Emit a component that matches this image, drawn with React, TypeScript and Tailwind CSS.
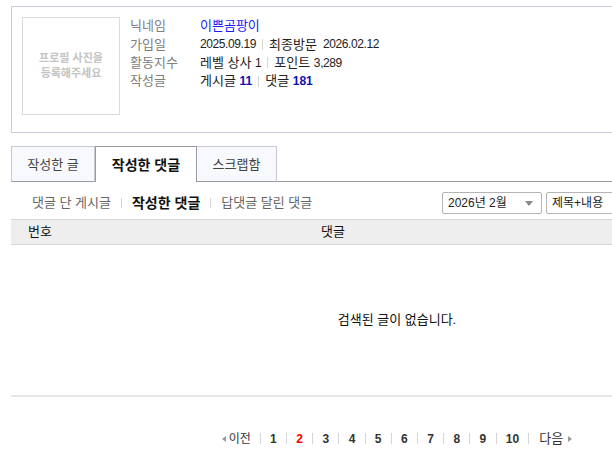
import React from 'react';

const FONT = { fontFamily: '"Liberation Sans", "Noto Sans CJK KR", sans-serif' };

function Sep({ h = 'h-[11px]' }: { h?: string }) {
  return <span className={`inline-block w-px ${h} bg-[#d5d5d5]`} />;
}

function ProfileRow({ label, children }: { label: string; children: React.ReactNode }) {
  return (
    <div className="flex h-[18.3px] items-center">
      <span className="w-[70px] text-[13px] text-[#808080]">{label}</span>
      <div className="flex items-center gap-[6px] text-[13px] text-[#222]">{children}</div>
    </div>
  );
}

function Num({ children }: { children: React.ReactNode }) {
  return <span className="text-[12px] tracking-[-0.4px]">{children}</span>;
}

function Select({ label, width, arrow }: { label: string; width: string; arrow?: boolean }) {
  return (
    <div className={`flex h-[22px] ${width} items-center justify-between rounded-[2px] border border-[#b5b5b5] bg-white pl-[5px] pr-[8px] text-[12px] text-[#222]`}>
      <span>{label}</span>
      {arrow && (
        <svg width="8" height="5" viewBox="0 0 8 5">
          <path d="M0 0h8L4 5z" fill="#888" />
        </svg>
      )}
    </div>
  );
}

export default function App() {
  const pages = [1, 2, 3, 4, 5, 6, 7, 8, 9, 10];
  return (
    <div className="h-[453px] w-[612px] overflow-hidden bg-white text-[12px]" style={FONT}>
      <div className="w-[783px] pl-[11px] pt-[6px]">
        {/* profile */}
        <div className="flex h-[127px] border border-[#cdcdda] p-[10px]">
          <div className="flex h-[98px] w-[98px] flex-col items-center justify-center border border-[#dcdcdc] text-[11px] font-bold leading-[15px] text-[#c4c4c4]">
            <span>프로필 사진을</span>
            <span>등록해주세요</span>
          </div>
          <div className="ml-[10px]">
            <ProfileRow label="닉네임">
              <span className="text-[#1a1aff]">이쁜곰팡이</span>
            </ProfileRow>
            <ProfileRow label="가입일">
              <Num>2025.09.19</Num>
              <Sep />
              <span>최종방문</span>
              <Num>2026.02.12</Num>
            </ProfileRow>
            <ProfileRow label="활동지수">
              <span>
                레벨 상사 <Num>1</Num>
              </span>
              <Sep />
              <span>
                포인트 <Num>3,289</Num>
              </span>
            </ProfileRow>
            <ProfileRow label="작성글">
              <span>
                게시글 <b className="text-[12px] text-[#1010b0]">11</b>
              </span>
              <Sep />
              <span>
                댓글 <b className="text-[12px] text-[#1010b0]">181</b>
              </span>
            </ProfileRow>
          </div>
        </div>

        {/* tabs */}
        <div className="mt-[13px] flex h-[36px] items-stretch border-b border-[#9a9aa6]">
          <div className="-mb-px flex w-[84px] items-center justify-center border border-[#c9c9d3] border-b-[#9a9aa6] bg-[#f8f9fc] pt-[1px] text-[13px] text-[#444]">
            작성한 글
          </div>
          <div className="-mb-px flex w-[102px] items-center justify-center border border-b-0 border-[#9a9aa6] bg-white pt-[1px] text-[14px] font-bold text-[#111]">
            작성한 댓글
          </div>
          <div className="-mb-px flex w-[80px] items-center justify-center border border-l-0 border-[#c9c9d3] border-b-[#9a9aa6] bg-[#f8f9fc] pt-[1px] text-[13px] text-[#444]">
            스크랩함
          </div>
        </div>

        {/* sub nav + selects */}
        <div className="mt-[10px] flex h-[22px] items-center">
          <div className="flex w-[431px] items-center gap-[10px] pl-[21px] text-[13px]">
            <span className="text-[#666]">댓글 단 게시글</span>
            <Sep h="h-[10px]" />
            <span className="text-[14px] font-bold text-[#111]">작성한 댓글</span>
            <Sep h="h-[10px]" />
            <span className="text-[#666]">답댓글 달린 댓글</span>
          </div>
          <Select label="2026년 2월" width="w-[100px]" arrow />
          <div className="w-[4px]" />
          <Select label="제목+내용" width="w-[80px]" />
        </div>

        {/* table */}
        <div className="mt-[5px] flex h-[26px] items-center border-t border-b border-[#d6d6d6] bg-[#eeeeee] text-[13px] text-[#111]">
          <span className="w-[310px] pl-[17px]">번호</span>
          <span>댓글</span>
        </div>
        <div className="flex h-[152px] items-center justify-center border-b-2 border-[#e6e6e6] text-[13px] text-[#111]">
          검색된 글이 없습니다.
        </div>

        {/* pagination */}
        <div className="mt-[32px] flex items-center justify-center text-[12px] font-bold text-[#333]">
          <span className="flex items-center gap-[3px] pr-[9px] font-normal">
            <svg width="4" height="6" viewBox="0 0 4 6">
              <path d="M4 0v6L0 3z" fill="#999" />
            </svg>
            이전
          </span>
          {pages.map(p => (
            <React.Fragment key={p}>
              <Sep />
              <span className={`px-[9.25px] ${p === 2 ? 'text-[#ff0000]' : ''}`}>{p}</span>
            </React.Fragment>
          ))}
          <Sep />
          <span className="flex items-center gap-[5px] pl-[10px] text-[13px] font-normal">
            다음
            <svg width="4" height="6" viewBox="0 0 4 6">
              <path d="M0 0v6l4-3z" fill="#999" />
            </svg>
          </span>
        </div>
      </div>
    </div>
  );
}
